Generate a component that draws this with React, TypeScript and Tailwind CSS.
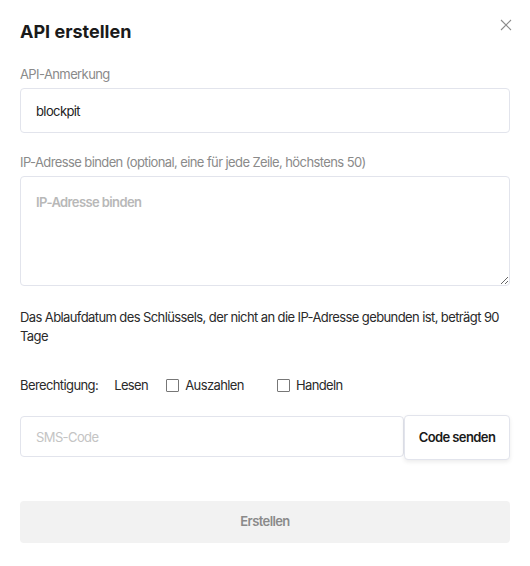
export default function App() {
  return (
    <div className="w-[530px] h-[566px] bg-white font-['Inter',sans-serif] text-[#1e1e1e] tracking-[-0.6px] relative">
      <button className="absolute top-[19px] right-[18px] text-[#8c8c8c]">
        <svg width="12" height="12" viewBox="0 0 12 12" fill="none" stroke="currentColor" strokeWidth="1.1">
          <path d="M1 1L11 11M11 1L1 11" />
        </svg>
      </button>
      <div className="px-5 pt-[20px]">
        <h2 className="text-[18px] font-bold leading-[24px] tracking-normal text-[#1a1a1a]">API erstellen</h2>

        <div className="mt-[21px] text-[13px] leading-[18px] text-[#8a8a8a]">API-Anmerkung</div>
        <input
          defaultValue="blockpit"
          className="mt-[5px] w-full h-[45px] rounded-[4px] border border-[#e2e4ec] px-[15px] text-[13px] text-[#222] outline-none"
        />

        <div className="mt-[20px] text-[13px] leading-[18px] text-[#8a8a8a]">
          IP-Adresse binden (optional, eine für jede Zeile, höchstens 50)
        </div>
        <textarea
          placeholder="IP-Adresse binden"
          className="mt-[5px] block w-full h-[110px] rounded-[4px] border border-[#e2e4ec] px-[15px] py-[16px] text-[13px] font-semibold outline-none placeholder:text-[#b8b8b8] placeholder:font-semibold"
        />

        <p className="mt-[22px] text-[13px] leading-[19px] text-[#2a2a2a]">
          Das Ablaufdatum des Schlüssels, der nicht an die IP-Adresse gebunden ist, beträgt 90 Tage
        </p>

        <div className="mt-[30px] flex items-center text-[13px] leading-[18px] text-[#2a2a2a]">
          <span>Berechtigung:</span>
          <span className="ml-[16px]">Lesen</span>
          <label className="ml-[18px] flex items-center">
            <span className="w-[13px] h-[13px] border border-[#777] rounded-[1px] bg-white" />
            <span className="ml-[6px]">Auszahlen</span>
          </label>
          <label className="ml-[33px] flex items-center">
            <span className="w-[13px] h-[13px] border border-[#777] rounded-[1px] bg-white" />
            <span className="ml-[6px]">Handeln</span>
          </label>
        </div>

        <div className="mt-[22px] flex items-start">
          <input
            placeholder="SMS-Code"
            className="flex-1 h-[41px] rounded-[4px] border border-[#e2e4ec] px-[15px] text-[13px] outline-none placeholder:text-[#c4c4c4]"
          />
          <button className="w-[106px] h-[45px] -mt-[1px] rounded-[4px] border border-[#e2e4ec] bg-white shadow-[0_2px_4px_rgba(0,0,0,0.08)] text-[13px] font-semibold text-[#1a1a1a]">
            Code senden
          </button>
        </div>

        <button className="mt-[41px] w-full h-[42px] rounded-[4px] bg-[#f2f2f2] text-[13px] font-semibold text-[#8a8a8a]">
          Erstellen
        </button>
      </div>
    </div>
  );
}
